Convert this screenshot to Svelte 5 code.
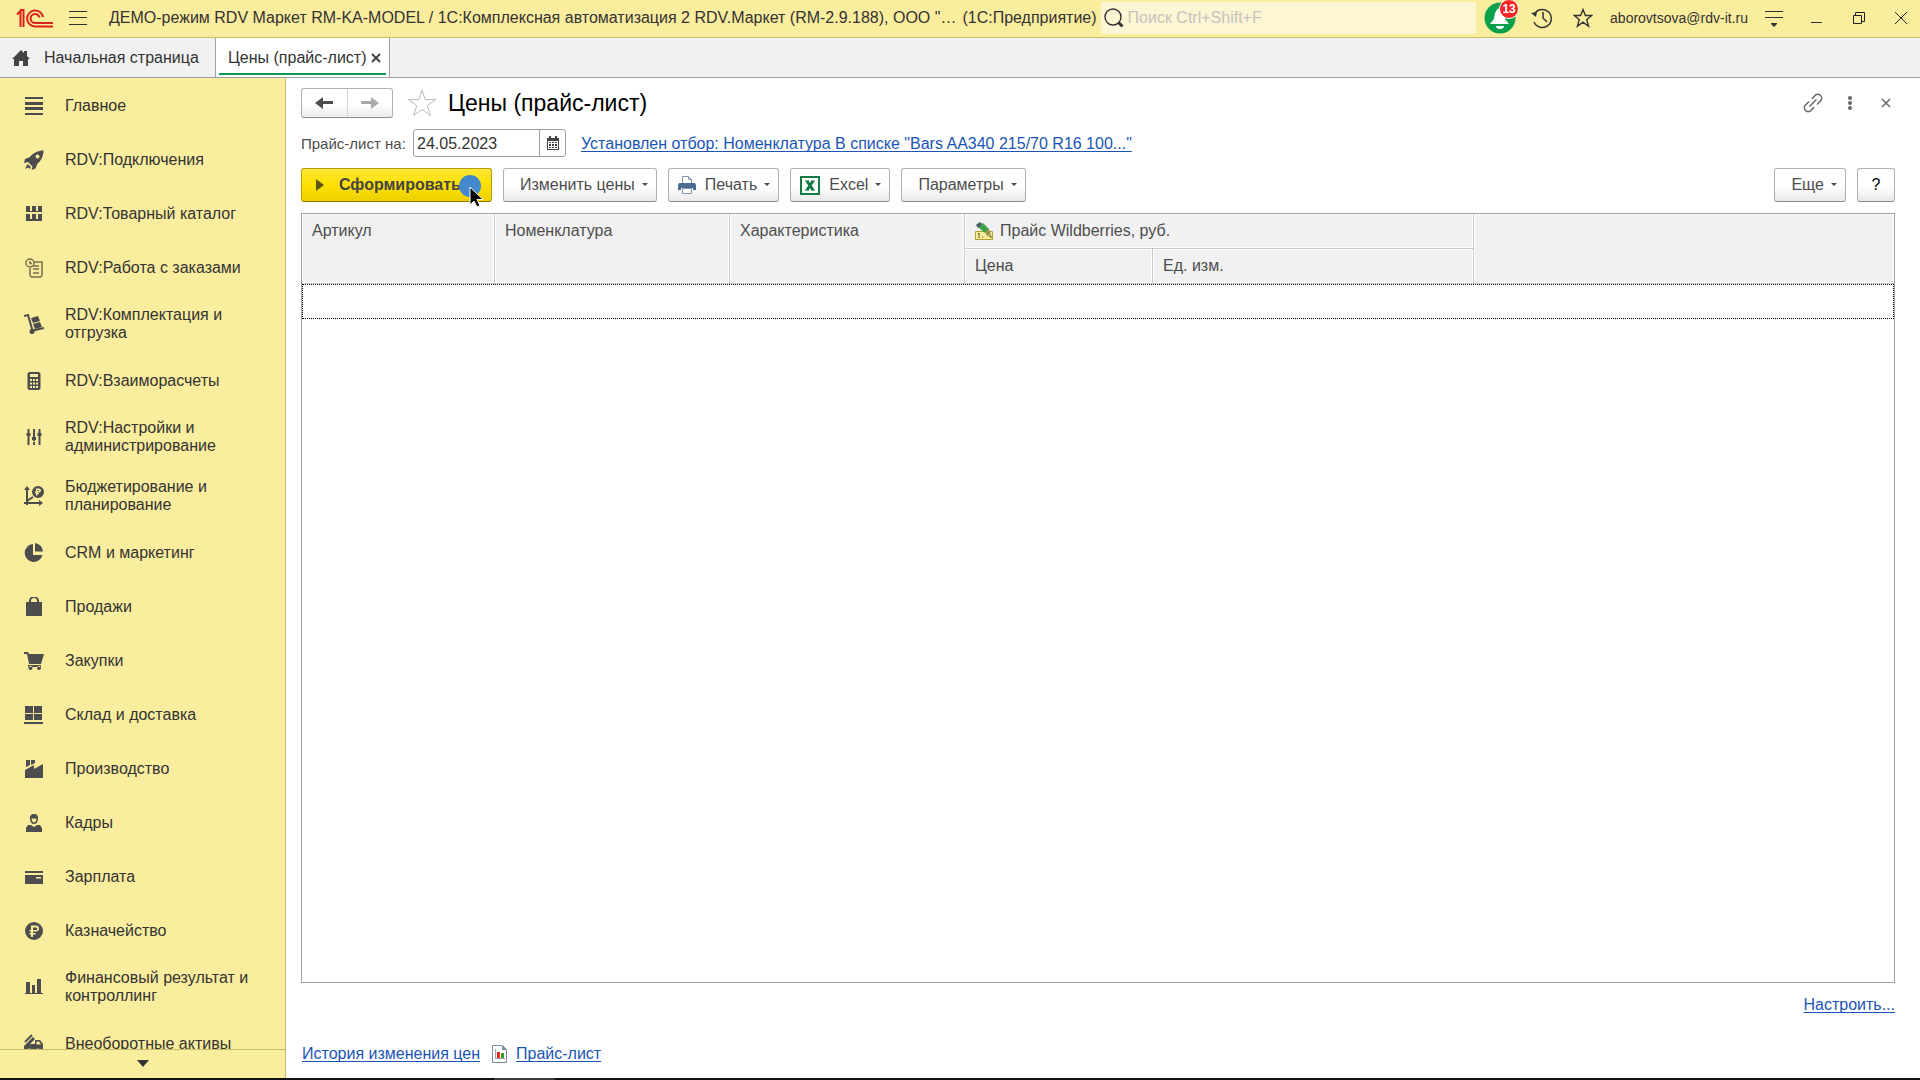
<svelte:options runes />

<script lang="ts">
	const sections = [
		{ title: 'Главное', fill: 'M1 1h18v2H1zM1 6h18v3H1zM1 11h18v3H1zM1 17h18v2H1z' },
		{
			title: 'RDV:Подключения',
			fill: 'M19.5.5C14 .5 9 3 6 7L1 9l-1 4 4-1 4.500 4.500-1 3.500 4-1.500 2-5C17 11 19.500 6 19.500.5zM13.500 4.500a2 2 0 1 1 0 4 2 2 0 0 1 0-4zM3.500 14L7 17l-1.500 2L4 17.500 1 19l1.500-3z'
		},
		{
			title: 'RDV:Товарный каталог',
			fill: 'M2 2h4v5H2zM8 2h4v5H8zM14 2h4v5h-4zM2 7h16v1H2zM2 10h4v5H2zM8 10h4v5H8zM14 10h4v5h-4zM2 15h16v2H2z'
		},
		{
			title: 'RDV:Работа с заказами',
			thin: true,
			stroke: 'M6 1a4 4 0 1 1 0 8a4 4 0 0 1 0-8zM6 3v2.500h2M10.500 4H18v13.500l-1.500 1.500h-9L6 17.500V10M9 8h6M9 11h6M9 15h6'
		},
		{
			title: 'RDV:Комплектация и отгрузка',
			fill: 'M7 4l7-2 2 5-7 2zM9 10l7-2 2 5-7 2zM8 15a2.500 2.500 0 1 1 0 5 2.500 2.500 0 0 1 0-5z',
			stroke: 'M0 2l4-1 4.500 15.500L20 14'
		},
		{
			title: 'RDV:Взаиморасчеты',
			fill: 'M5 1h10l1.500 1.500v15L15 19H5l-1.500-1.500v-15zM6 3v3h8V3zM6 8v2h2V8zM9 8v2h2V8zM12 8v2h2V8zM6 11.500v2h2v-2zM9 11.500v2h2v-2zM12 11.500v2h2v-2zM6 15v2h2v-2zM9 15v2h2v-2zM12 15v2h2v-2z'
		},
		{
			title: 'RDV:Настройки и администрирование',
			fill: 'M3.500 2h2v4h1v3h-1v9h-2V9h-1V6h1zM9 2h2v8h1v3h-1v1H9v-1H8v-3h1zM9 15h2v3H9zM14.500 2h2v4h1v3h-1v9h-2V9h-1V6h1z'
		},
		{
			title: 'Бюджетирование и планирование',
			fill: 'M14 0a6 6 0 1 1 0 12 6 6 0 0 1 0-12zM12 2.500v3h-1v1.500h1v2.500h1.500V8H15V7h-1.500V6.500H15a2 2 0 0 0 0-4zM13.500 4H15v1h-1.500zM0 4l3-4 3 4zM15 14l4 3-4 3z',
			stroke: 'M3 3v16M0 17h17M3 15l6-4'
		},
		{
			title: 'CRM и маркетинг',
			fill: 'M9 1a9 9 0 1 0 9.500 11H9zM11 0v8.500h8A9 9 0 0 0 11 0z'
		},
		{
			title: 'Продажи',
			fill: 'M2 5h3V4a5 5 0 0 1 10 0v1h3v14H2zM7 5h6V4a3 3 0 0 0-6 0z'
		},
		{
			title: 'Закупки',
			fill: 'M0 1h4l1 2h15l-3 10H5L3 3H0zM4 14h13v2H4zM6.500 15a2 2 0 1 1 0 4 2 2 0 0 1 0-4zM15 15a2 2 0 1 1 0 4 2 2 0 0 1 0-4z'
		},
		{ title: 'Склад и доставка', fill: 'M1 1h8v7H1zM10 1h8v7h-8zM1 9h8v6H1zM10 9h8v6h-8zM0 17h19v2H0z' },
		{ title: 'Производство', fill: 'M2 1h4v5L2 8zM7 1h4v3L7 6zM1 11l9-5v4l9-5v14H1z' },
		{
			title: 'Кадры',
			fill: 'M10 1c3 0 4.500 2 4 5-.4 3-1.500 5-4 5s-3.600-2-4-5C5.500 3 7 1 10 1zM7.500 5.500C8 8 8.500 9.500 10 9.500s2-1.500 2.500-4zM2 19v-4l2-3h3l3 2 3-2h3l2 3v4z'
		},
		{ title: 'Зарплата', fill: 'M1 4h18v2H1zM1 8h18v9H1zM12 10v1.500h5V10z' },
		{
			title: 'Казначейство',
			fill: 'M10 1a9 9 0 1 1 0 18 9 9 0 0 1 0-18zM7 4.500V9H5.500v1.500H7V12H5.500v1.500H7V16h2v-2.500h2.500V12H9v-1.500h3a3 3 0 0 0 0-6zM9 6.500h3a1 1 0 0 1 0 2.500H9z'
		},
		{
			title: 'Финансовый результат и контроллинг',
			fill: 'M2 5h4v11H2zM8 8h3v8H8zM13 2h4v14h-4zM1 16h18v1H1z'
		},
		{
			title: 'Внеоборотные активы',
			fill: 'M0 12l9-9 2 2-5 5h5V6h5l3 4v7h-2.500a2.500 2.500 0 0 0-5 0H8a2.500 2.500 0 0 0-5 0H0zM12.500 7.500v3H17l-2-3zM5.500 15a2 2 0 1 1 0 4 2 2 0 0 1 0-4zM14 15a2 2 0 1 1 0 4 2 2 0 0 1 0-4z',
			stroke: 'M1 8l7-7'
		}
	];

	let search = $state('');
	let priceDate = $state('24.05.2023');
</script>

{#snippet caret()}
	<svg class="caret" width="6" height="4" viewBox="0 0 6 4"><path d="M0 0h6L3 3z" /></svg>
{/snippet}

<div class="app">
	<header class="topbar">
		<svg class="logo" width="37" height="20" viewBox="0 0 37 20" fill="none" stroke="#d9231c" stroke-width="2">
			<path d="M1 6.500L4.500 3v16M4 2h3.500v17" />
			<path d="M27 9a8 8 0 1 0-8 9.500h18" />
			<path d="M23.500 9.500a4.500 4.500 0 1 0-4.500 5.500h18" />
		</svg>
		<button class="plain menu" aria-label="Меню">
			<svg width="18" height="16" viewBox="0 0 18 16" fill="#333"><path d="M0 1h18v1H0zM0 7h18v1H0zM0 14h18v1H0z" /></svg>
		</button>
		<span class="app-title">ДЕМО-режим RDV Маркет RM-KA-MODEL / 1С:Комплексная автоматизация 2 RDV.Маркет (RM-2.9.188), ООО "…</span>
		<span class="platform">(1С:Предприятие)</span>
		<label class="search">
			<svg width="20" height="20" viewBox="0 0 20 20" fill="none" stroke="#333">
				<circle cx="9" cy="9" r="8" stroke-width="1.400" />
				<path d="M14.500 14.500l4 4" stroke-width="3" />
			</svg>
			<input type="text" placeholder="Поиск Ctrl+Shift+F" aria-label="Поиск" bind:value={search} />
		</label>
		<button class="plain bell" aria-label="Уведомления">
			<svg width="32" height="32" viewBox="0 0 32 32">
				<circle cx="16" cy="16" r="15.500" fill="#0ba04c" />
				<path d="M15.500 6c-3 1-4.500 4-5 8-.4 3-1 4.500-4 7v1h18v-1c-3-2.500-3.600-4-4-7-.5-4-2-7-5-8z" fill="#fff" />
				<path d="M12 24h8a4 3 0 0 1-8 0z" fill="#fff" />
			</svg>
			<span class="badge">13</span>
		</button>
		<button class="plain history" aria-label="История">
			<svg width="22" height="22" viewBox="0 0 22 22" fill="none" stroke="#333" stroke-width="1.500">
				<path d="M3 8a9 9 0 1 1 0 7M12 5v6l4 4" />
				<path d="M0 6l6-1-1 5z" fill="#333" stroke="none" />
			</svg>
		</button>
		<button class="plain fav" aria-label="Избранное">
			<svg width="20" height="20" viewBox="0 0 20 20" fill="none" stroke="#333" stroke-width="1.400">
				<path d="M10 1.500l2.400 6h6.300l-5 4.200 1.900 6.500-5.600-4-5.600 4 1.900-6.500-5-4.200h6.300z" />
			</svg>
		</button>
		<span class="user">aborovtsova@rdv-it.ru</span>
		<button class="plain filter" aria-label="Сервис">
			<svg width="18" height="18" viewBox="0 0 18 18" fill="#333"><path d="M0 2h18v1H0zM0 8h18v1H0zM6 14h6v1l-3 3-3-3z" /></svg>
		</button>
		<div class="window">
			<button class="plain" aria-label="Свернуть">
				<svg width="12" height="12" viewBox="0 0 12 12" stroke="#333"><path d="M0 10.500h11" /></svg>
			</button>
			<button class="plain" aria-label="Развернуть">
				<svg width="12" height="12" viewBox="0 0 12 12" fill="none" stroke="#222"><path d="M.5 3.500h8v8h-8zM2.500 3.500v-3h9v9h-3" /></svg>
			</button>
			<button class="plain" aria-label="Закрыть">
				<svg width="12" height="12" viewBox="0 0 12 12" stroke="#222"><path d="M0 0l12 12M12 0L0 12" /></svg>
			</button>
		</div>
	</header>

	<nav class="tabs">
		<a class="tab" href="#home">
			<svg width="18" height="16" viewBox="0 0 18 16" fill="#444"><path d="M9 0l3 3V1h3v5l3 3h-2v7h-5v-5H7v5H2V9H0z" /></svg>
			Начальная страница
		</a>
		<div class="tab active">
			<a href="#prices">Цены (прайс-лист)</a>
			<button class="plain" aria-label="Закрыть вкладку">
				<svg width="10" height="10" viewBox="0 0 10 10" stroke="#444" stroke-width="2"><path d="M1 1l8 8M9 1L1 9" /></svg>
			</button>
		</div>
	</nav>

	<div class="body">
		<aside class="sidebar">
			<nav class="sections">
				{#each sections as section}
					<a href="#section">
						<svg width="20" height="20" viewBox="0 0 20 20" class:thin={section.thin}>
							{#if section.fill}
								<path d={section.fill} fill="#4d4d4d" fill-rule="evenodd" />
							{/if}
							{#if section.stroke}
								<path d={section.stroke} class="line" />
							{/if}
						</svg>
						<span>{section.title}</span>
					</a>
				{/each}
			</nav>
			<button class="plain more" aria-label="Прокрутить вниз">
				<svg width="12" height="8" viewBox="0 0 12 8" fill="#333"><path d="M0 0h12L6 7z" /></svg>
			</button>
		</aside>

		<main>
			<div class="heading">
				<div class="nav-buttons">
					<button aria-label="Назад">
						<svg width="18" height="14" viewBox="0 0 18 14" fill="#4d4d4d"><path d="M0 7l8-6v4h10v3H8v5z" /></svg>
					</button>
					<button aria-label="Вперед">
						<svg width="18" height="14" viewBox="0 0 18 14" fill="#aaa"><path d="M18 7l-8-6v4H0v3h10v5z" /></svg>
					</button>
				</div>
				<button class="plain big-star" aria-label="В избранное">
					<svg width="30" height="30" viewBox="0 0 30 30" fill="none" stroke="#b4bac2">
						<path d="M15 2l3.300 9.600h10.200l-8.200 6.100 3.100 9.800L15 21.500l-8.400 6 3.100-9.800-8.200-6.100h10.200z" />
					</svg>
				</button>
				<h1>Цены (прайс-лист)</h1>
				<div class="form-tools">
					<button class="plain" aria-label="Ссылка">
						<svg width="20" height="20" viewBox="0 0 20 20" fill="none" stroke="#666" stroke-width="1.500">
							<path d="M9 6l3-3.500a3.800 3.800 0 0 1 5.500 5.500L14 11.500M11 14l-3 3.500A3.800 3.800 0 0 1 2.500 12L6 8.500M6.500 13.500l7-7" />
						</svg>
					</button>
					<button class="plain" aria-label="Дополнительно">
						<svg width="6" height="16" viewBox="0 0 6 16" fill="#666">
							<circle cx="3" cy="3" r="2" /><circle cx="3" cy="8" r="2" /><circle cx="3" cy="13" r="2" />
						</svg>
					</button>
					<button class="plain" aria-label="Закрыть">
						<svg width="18" height="10" viewBox="0 0 18 10" stroke="#666" stroke-width="1.500"><path d="M5 1l8 8M13 1L5 9" /></svg>
					</button>
				</div>
			</div>

			<div class="filters">
				<label for="price-date">Прайс-лист на:</label>
				<div class="date">
					<input id="price-date" type="text" bind:value={priceDate} />
					<button class="plain" aria-label="Выбрать дату">
						<svg width="12" height="14" viewBox="0 0 12 14" fill="#444" fill-rule="evenodd">
							<path d="M0 2h2V0h2v2h4V0h2v2h2v12H0zM1 5v8h10V5zM2 6h2v1H2zM5 6h2v1H5zM8 6h2v1H8zM2 8h2v2H2zM5 8h2v2H5zM8 8h2v2H8zM2 11h2v1H2zM5 11h2v1H5zM8 11h2v1H8z" />
						</svg>
					</button>
				</div>
				<a class="link" href="#filter">Установлен отбор: Номенклатура В списке "Bars AA340 215/70 R16 100..."</a>
			</div>

			<div class="toolbar">
				<div class="run">
					<button class="btn primary">
						<svg width="8" height="12" viewBox="0 0 8 12" fill="#5b5313"><path d="M0 0l8 6-8 6z" /></svg>
						Сформировать
					</button>
					<svg class="pointer" width="28" height="34" viewBox="0 0 28 34">
						<circle cx="11" cy="11" r="11" fill="#4489cb" />
						<path d="M11 12v18l4-4 3 6 3-1.500-3-6h6z" fill="#000" stroke="#fff" />
					</svg>
				</div>
				<button class="btn">Изменить цены {@render caret()}</button>
				<button class="btn with-icon">
					<svg width="18" height="18" viewBox="0 0 18 18">
						<path d="M4.500 8V.5h6l3 3V8" fill="#fff" stroke="#8497aa" />
						<path d="M10.500.5v3h3" fill="none" stroke="#8497aa" />
						<path d="M1 7h16l1 2v5h-3v-2H3v2H0V9z" fill="#4a6d93" />
						<path d="M4.500 12.500h9v5h-9z" fill="#fff" stroke="#8497aa" />
					</svg>
					Печать {@render caret()}
				</button>
				<button class="btn with-icon">
					<svg width="20" height="19" viewBox="0 0 20 19">
						<path d="M1 1h18v17H1z" fill="#fff" stroke="#107c41" stroke-width="2" />
						<path d="M7 5l6 9M13 5l-6 9" stroke="#107c41" stroke-width="3" />
						<path d="M5 5h4M11 5h4M5 14h4M11 14h4" stroke="#107c41" />
					</svg>
					Excel {@render caret()}
				</button>
				<button class="btn">Параметры {@render caret()}</button>
				<button class="btn right">Еще {@render caret()}</button>
				<button class="btn help">?</button>
			</div>

			<div class="grid">
				<table>
					<colgroup>
						<col class="c-article" />
						<col class="c-item" />
						<col class="c-item" />
						<col class="c-price" />
						<col class="c-unit" />
						<col />
					</colgroup>
					<thead>
						<tr>
							<th rowspan="2">Артикул</th>
							<th rowspan="2">Номенклатура</th>
							<th rowspan="2">Характеристика</th>
							<th colspan="2">
								<div class="price-type">
									<svg width="18" height="18" viewBox="0 0 18 18">
										<path d="M.5 9.500h17v8H.5z" fill="#f7ec9a" stroke="#b5a12b" />
										<path d="M3 12l1-1v5M7 15h1M11 12h2v2M14 14h2v2" fill="none" stroke="#5b5520" />
										<path d="M4 3l4-2 6 6-4 4-6-5z" fill="#42a04b" />
										<path d="M1 3l4-3 2 2-4 4z" fill="#465563" />
										<path d="M10 11l4-4 2 6z" fill="#a58a56" />
									</svg>
									Прайс Wildberries, руб.
								</div>
							</th>
							<th rowspan="2" class="last" aria-label="Пусто"></th>
						</tr>
						<tr>
							<th>Цена</th>
							<th>Ед. изм.</th>
						</tr>
					</thead>
					<tbody>
						<tr>
							<td colspan="6"></td>
						</tr>
					</tbody>
				</table>
			</div>

			<div class="setup"><a class="link" href="#setup">Настроить...</a></div>

			<div class="links">
				<a class="link" href="#history">История изменения цен</a>
				<a class="report" href="#pricelist">
					<svg width="16" height="18" viewBox="0 0 16 18">
						<path d="M.5.5h10l4 4v13H.5z" fill="#fff" stroke="#7d8c99" />
						<path d="M10 0v5h5z" fill="#7d8c99" />
						<path d="M3.500 4v9.500H13" fill="none" stroke="#9aa5ae" />
						<path d="M5 7h3v6H5z" fill="#e8281c" />
						<path d="M9 8h3v5H9z" fill="#3f9c1d" />
					</svg>
					<span class="link">Прайс-лист</span>
				</a>
			</div>
		</main>
	</div>
	<div class="taskbar"><span></span></div>
</div>

<style>
	:global(body) {
		margin: 0;
		background: #fff;
	}

	.app {
		display: flex;
		flex-direction: column;
		height: 100vh;
		font-family: 'Liberation Sans', Arial, sans-serif;
		font-size: 16px;
		line-height: 18px;
		color: #4d4d4d;
	}

	.app * {
		box-sizing: border-box;
	}

	svg {
		display: block;
		flex: none;
	}

	button,
	input {
		font: inherit;
		color: inherit;
	}

	a {
		color: inherit;
		text-decoration: none;
	}

	.plain {
		display: flex;
		align-items: center;
		justify-content: center;
		flex: none;
		padding: 0;
		border: 0;
		background: none;
	}

	.topbar {
		display: flex;
		align-items: center;
		flex: none;
		height: 38px;
		padding: 0 13px 1px 16px;
		border-bottom: 1px solid #c9bc6c;
		background: #fbed9e;
		color: #333;
		white-space: nowrap;
	}

	.menu {
		margin: 0 22px 0 16px;
	}

	.platform {
		margin: 0 4px 0 6px;
	}

	.search {
		display: flex;
		align-items: center;
		flex: 1;
		gap: 4px;
		height: 32px;
		padding: 0 3px;
		border-radius: 3px;
		background: #fdf6d4;
	}

	.search input {
		flex: 1;
		min-width: 0;
		padding: 0;
		border: 0;
		outline: 0;
		background: none;
	}

	.search input::placeholder {
		color: #c5c3bd;
	}

	.bell {
		position: relative;
		margin-left: 8px;
	}

	.badge {
		position: absolute;
		top: -3px;
		right: -3px;
		width: 20px;
		height: 20px;
		border: 1px solid #fff;
		border-radius: 50%;
		background: #fb2424;
		color: #fff;
		font-size: 12px;
		font-weight: bold;
		line-height: 18px;
		text-align: center;
	}

	.history {
		margin-left: 15px;
	}

	.fav {
		margin: 0 17px 0 20px;
	}

	.user {
		font-size: 14px;
	}

	.filter {
		margin: 0 28px 0 17px;
	}

	.window {
		display: flex;
		gap: 30px;
	}

	.tabs {
		display: flex;
		flex: none;
		height: 40px;
		border-bottom: 1px solid #a0a0a0;
		background: #f1f1f1;
		color: #333;
	}

	.tab {
		display: flex;
		align-items: center;
		gap: 14px;
		width: 215px;
		padding-left: 12px;
		white-space: nowrap;
	}

	.tab.active {
		gap: 4px;
		width: 175px;
		border: solid #a0a0a0;
		border-width: 0 1px;
		background: linear-gradient(#0b9850, #0b9850) center bottom 2px / 167px 2px no-repeat #fff;
	}

	.body {
		display: flex;
		flex: 1;
		min-height: 0;
	}

	.sidebar {
		display: flex;
		flex-direction: column;
		flex: none;
		width: 286px;
		border-right: 1px solid #c9bc6c;
		background: #fbed9e;
		color: #333;
	}

	.sections {
		flex: 1;
		min-height: 0;
		overflow: hidden;
	}

	.sections a {
		display: flex;
		align-items: center;
		gap: 21px;
		min-height: 54px;
		padding: 12px 32px 11px 24px;
	}

	.line {
		fill: none;
		stroke: #4d4d4d;
		stroke-width: 2;
	}

	.thin .line {
		stroke: #77704f;
		stroke-width: 1.5;
	}

	.more {
		height: 29px;
		border-top: 1px solid #c9bc6c;
	}

	main {
		display: flex;
		flex-direction: column;
		flex: 1;
		min-width: 0;
		padding: 10px 25px 15px 15px;
	}

	.heading {
		display: flex;
		align-items: center;
		height: 30px;
	}

	.nav-buttons {
		display: flex;
		width: 92px;
		height: 30px;
		border: 1px solid #b0b0b0;
		border-bottom-color: #8c8c8c;
		border-radius: 3px;
		background: linear-gradient(#fff 50%, #ececec);
	}

	.nav-buttons button {
		display: flex;
		align-items: center;
		justify-content: center;
		flex: 1;
		padding: 0;
		border: 0;
		background: none;
	}

	.nav-buttons button + button {
		border-left: 1px solid #d4d4d4;
	}

	.big-star {
		margin: 0 11px 0 14px;
	}

	h1 {
		margin: 0;
		font-size: 23px;
		font-weight: normal;
		line-height: 30px;
		color: #000;
	}

	.form-tools {
		display: flex;
		align-items: center;
		gap: 24px;
		margin-left: auto;
	}

	.filters {
		display: flex;
		align-items: center;
		height: 28px;
		margin: 11px 0;
		white-space: nowrap;
	}

	.filters label {
		width: 112px;
		padding-top: 2px;
		font-size: 15px;
	}

	.filters .link {
		padding-top: 2px;
	}

	.date {
		display: flex;
		width: 153px;
		height: 28px;
		margin-right: 15px;
		border: 1px solid #a0a0a0;
		border-radius: 3px;
		color: #333;
	}

	.date input {
		flex: 1;
		min-width: 0;
		padding: 2px 3px 0;
		border: 0;
		outline: 0;
		background: none;
	}

	.date button {
		width: 26px;
		border-left: 1px solid #a0a0a0;
	}

	.link {
		color: #1a55b5;
		text-decoration: underline;
		text-underline-offset: 2px;
		text-decoration-thickness: 1px;
		text-decoration-skip-ink: none;
	}

	.toolbar {
		display: flex;
		gap: 11px;
		height: 34px;
		margin-bottom: 11px;
	}

	.btn {
		display: flex;
		align-items: center;
		gap: 9px;
		height: 34px;
		padding: 0 8px 0 16px;
		border: 1px solid #b0b0b0;
		border-bottom-color: #8c8c8c;
		border-radius: 3px;
		background: linear-gradient(#fff 55%, #e9e9e9);
		white-space: nowrap;
	}

	.with-icon {
		padding-left: 9px;
	}

	.caret {
		margin-left: -2px;
		fill: #4d4d4d;
	}

	.run {
		position: relative;
		width: 191px;
	}

	.primary {
		gap: 15px;
		width: 100%;
		padding-left: 14px;
		border-color: #b39b12;
		border-bottom-color: #8a7708;
		background: linear-gradient(#ffe838, #fde000 50%, #ecd000);
		font-weight: bold;
		color: #444;
	}

	.pointer {
		position: absolute;
		top: 7px;
		left: 158px;
	}

	.right {
		margin-left: auto;
	}

	.help {
		justify-content: center;
		width: 38px;
		padding: 0;
		color: #000;
	}

	.grid {
		flex: 1;
		min-height: 0;
		border: 1px solid #a0a0a0;
		background: #fff;
	}

	table {
		width: 100%;
		table-layout: fixed;
		border-collapse: separate;
		border-spacing: 0;
	}

	.c-article {
		width: 193px;
	}

	.c-item {
		width: 235px;
	}

	.c-price {
		width: 188px;
	}

	.c-unit {
		width: 321px;
	}

	th {
		height: 35px;
		padding: 8px 10px;
		border: solid #c8c8c8;
		border-width: 0 1px 1px 0;
		background: #f1f1f1;
		box-shadow: inset 0 0 0 1px #fff;
		font-weight: normal;
		text-align: left;
		vertical-align: top;
		white-space: nowrap;
	}

	th.last {
		border-right: 0;
	}

	.price-type {
		display: flex;
		align-items: center;
		gap: 7px;
	}

	td {
		height: 35px;
		padding: 0;
		border: 1px dotted #000;
	}

	.setup {
		display: flex;
		justify-content: flex-end;
		margin-top: 13px;
	}

	.links {
		display: flex;
		align-items: center;
		gap: 12px;
		margin-top: 31px;
		padding-left: 1px;
	}

	.report {
		display: flex;
		align-items: center;
		gap: 8px;
	}

	.taskbar {
		flex: none;
		height: 2px;
		padding-left: 494px;
		background: #111;
	}

	.taskbar span {
		display: block;
		width: 61px;
		height: 2px;
		background: #3a3a3a;
	}
</style>
